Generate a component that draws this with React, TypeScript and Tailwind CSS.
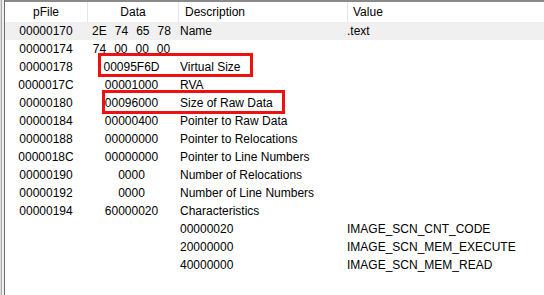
const rows: { off: string; data: string[]; desc: string; value?: string; hl?: boolean }[] = [
  { off: "00000170", data: ["2E", "74", "65", "78"], desc: "Name", value: ".text", hl: true },
  { off: "00000174", data: ["74", "00", "00", "00"], desc: "" },
  { off: "00000178", data: ["00095F6D"], desc: "Virtual Size" },
  { off: "0000017C", data: ["00001000"], desc: "RVA" },
  { off: "00000180", data: ["00096000"], desc: "Size of Raw Data" },
  { off: "00000184", data: ["00000400"], desc: "Pointer to Raw Data" },
  { off: "00000188", data: ["00000000"], desc: "Pointer to Relocations" },
  { off: "0000018C", data: ["00000000"], desc: "Pointer to Line Numbers" },
  { off: "00000190", data: ["0000"], desc: "Number of Relocations" },
  { off: "00000192", data: ["0000"], desc: "Number of Line Numbers" },
  { off: "00000194", data: ["60000020"], desc: "Characteristics" },
  { off: "", data: [], desc: "00000020", value: "IMAGE_SCN_CNT_CODE" },
  { off: "", data: [], desc: "20000000", value: "IMAGE_SCN_MEM_EXECUTE" },
  { off: "", data: [], desc: "40000000", value: "IMAGE_SCN_MEM_READ" },
];

const cols = "grid grid-cols-[82px_91px_169px_1fr]";

export default function App() {
  return (
    <div
      className="relative flex h-[295px] w-[544px] overflow-hidden bg-white text-[12px] text-black"
      style={{ fontFamily: '"Liberation Sans", Arial, sans-serif' }}
    >
      {/* left frame */}
      <div className="flex h-full shrink-0">
        <div className="w-px bg-[#dcdcdc]" />
        <div className="w-px bg-[#a9a9a9]" />
        <div className="w-[2px] bg-[#f0f0f0]" />
        <div className="w-px bg-[#6d6d6d]" />
      </div>

      <div className="flex min-w-0 flex-1 flex-col">
        {/* header */}
        <div className="border-t-2 border-[#8a8a8a]">
          <div className={`${cols} h-[20px] items-center leading-[20px]`}>
            <div className="text-center">pFile</div>
            <div className="border-l border-[#e5e5e5] text-center">Data</div>
            <div className="border-l border-[#e5e5e5] pl-[6px]">Description</div>
            <div className="border-l border-[#e5e5e5] pl-[5px]">Value</div>
          </div>
        </div>

        {/* rows */}
        {rows.map((r, i) => (
          <div key={i} className={`${cols} h-[18px] items-center leading-[18px] ${r.hl ? "bg-[#f0f0f0]" : ""}`}>
            <div className="text-center">{r.off}</div>
            <div className="flex justify-center gap-[8px] pr-[2px]">
              {r.data.map((d, j) => (
                <span key={j}>{d}</span>
              ))}
            </div>
            <div className="pl-[2px]">{r.desc}</div>
            <div>{r.value ?? ""}</div>
          </div>
        ))}
      </div>

      {/* annotation boxes */}
      <div className="pointer-events-none absolute left-[98px] top-[53px] h-[24px] w-[155px] border-[3px] border-[#ee1111]" />
      <div className="pointer-events-none absolute left-[102px] top-[90px] h-[24px] w-[183px] border-[3px] border-[#ee1111]" />
    </div>
  );
}
